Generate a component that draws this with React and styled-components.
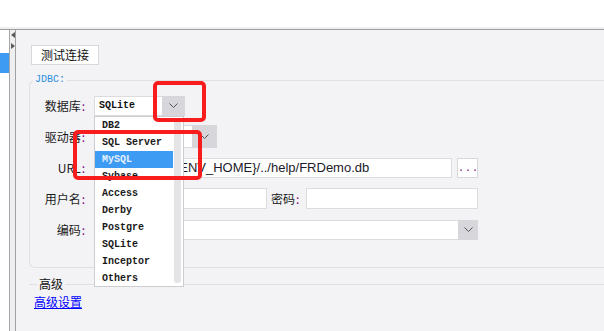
import styled, { createGlobalStyle } from 'styled-components';

const GlobalStyle = createGlobalStyle`
  html, body { margin: 0; padding: 0; background: #fff; }
  body {
    width: 604px;
    height: 331px;
    overflow: hidden;
    font-family: "Noto Sans CJK SC", "Liberation Sans", sans-serif;
  }
`;

const dbList = ['DB2', 'SQL Server', 'MySQL', 'Sybase', 'Access', 'Derby', 'Postgre', 'SQLite', 'Inceptor', 'Others'];

function Chevron() {
  return (
    <svg width="9" height="5" viewBox="0 0 9 5">
      <polyline points="0.5,0.5 4.5,4.5 8.5,0.5" fill="none" stroke="#555" strokeWidth="1" />
    </svg>
  );
}

function ComboBox({ width, height, btn, children, menu }) {
  return (
    <ComboWrap $width={width} $height={height}>
      <ComboText>{children}</ComboText>
      <ComboButton $width={btn}><Chevron /></ComboButton>
      {menu}
    </ComboWrap>
  );
}

export default function App() {
  return (
    <>
      <GlobalStyle />
      <Page>
        <TopBar />
        <Body>
          <SideList>
            <SideItem />
          </SideList>
          <Collapser>
            <svg width="4" height="6" viewBox="0 0 4 6"><polygon points="4,0 0,3 4,6" fill="#5a5a5a" /></svg>
            <svg width="4" height="6" viewBox="0 0 4 6"><polygon points="0,0 4,3 0,6" fill="#5a5a5a" /></svg>
          </Collapser>
          <Main>
            <TestButton>测试连接</TestButton>
            <Group>
              <Legend>JDBC:</Legend>
              <FormGrid>
                <Label>数据库<Colon>:</Colon></Label>
                <Field>
                  <ComboBox
                    width={91}
                    height={20}
                    btn={23}
                    menu={
                      <Dropdown>
                        <Items>
                          {dbList.map((name) => (
                            <Item key={name} $selected={name === 'MySQL'}>{name}</Item>
                          ))}
                        </Items>
                        <ScrollTrack><Thumb /></ScrollTrack>
                      </Dropdown>
                    }
                  >
                    SQLite
                  </ComboBox>
                </Field>

                <Label>驱动器<Colon>:</Colon></Label>
                <Field>
                  <ComboBox width={123} height={23} btn={25} />
                </Field>

                <Label>URL<Colon>:</Colon></Label>
                <Field>
                  <TextInput $width={358} $pad={4}>jdbc:sqlite://${'{'}ENV_HOME{'}'}/../help/FRDemo.db</TextInput>
                  <DotsButton>...</DotsButton>
                </Field>

                <Label>用户名<Colon>:</Colon></Label>
                <Field>
                  <TextInput $width={173} $height={21} />
                  <InlineLabel>密码<Colon>:</Colon></InlineLabel>
                  <TextInput $grow $height={21} />
                </Field>

                <Label>编码<Colon>:</Colon></Label>
                <Field>
                  <ComboBox width={384} height={20} btn={20} />
                </Field>
              </FormGrid>
            </Group>
            <AdvGroup>
              <AdvLegend>高级</AdvLegend>
              <AdvLink href="#">高级设置</AdvLink>
            </AdvGroup>
          </Main>
        </Body>
        <Mark $x={153} $y={81} $w={53} $h={41} />
        <Mark $x={73} $y={130} $w={129} $h={50} />
      </Page>
    </>
  );
}

const Page = styled.div`
  position: relative;
  width: 604px;
  height: 331px;
  display: flex;
  flex-direction: column;
  overflow: hidden;
`;

const TopBar = styled.div`
  height: 27px;
  background: #fff;
  border-bottom: 2px solid #efeff1;
  flex-shrink: 0;
`;

const Body = styled.div`
  flex: 1;
  display: flex;
  border-top: 1px solid #9d9d9d;
  min-height: 0;
`;

const SideList = styled.div`
  width: 9px;
  background: #fff;
  border-right: 1px solid #a6a6a6;
  padding-top: 23px;
`;

const SideItem = styled.div`
  height: 20px;
  background: #3d9bf3;
`;

const Collapser = styled.div`
  width: 6px;
  background: #efeff1;
  border-right: 1px solid #a0a0a0;
  display: flex;
  flex-direction: column;
  align-items: flex-end;
  gap: 5px;
  padding-top: 2px;
  box-sizing: border-box;
`;

const Main = styled.div`
  flex: 1;
  background: #f3f3f5;
  padding: 15px 0 0 13px;
  display: flex;
  flex-direction: column;
  align-items: stretch;
  min-width: 0;
`;

const TestButton = styled.button`
  align-self: flex-start;
  margin-left: 2px;
  width: 68px;
  height: 20px;
  box-sizing: border-box;
  padding: 0;
  background: #fff;
  border: 1px solid #d7d7d9;
  font-family: "Noto Sans CJK SC", sans-serif;
  font-size: 12px;
  line-height: 18px;
  color: #111;
`;

const Group = styled.fieldset`
  margin: 9px 0 0 0;
  padding: 4px 0 22px 0;
  border: 1px solid #e0e0e3;
  border-right: none;
  border-radius: 6px 0 0 6px;
  min-width: 0;
`;

const Legend = styled.legend`
  margin-left: 3px;
  padding: 0 2px;
  font-family: "Liberation Mono", monospace;
  font-size: 10px;
  line-height: 12px;
  color: #2a8ee0;
`;

const FormGrid = styled.div`
  display: grid;
  grid-template-columns: 55px 384px;
  column-gap: 9px;
  grid-auto-rows: 31px;
  align-items: center;
`;

const Label = styled.div`
  text-align: right;
  white-space: nowrap;
  font-size: 12px;
  color: #1a1a1a;
`;

const Colon = styled.span`
  color: #800080;
  margin-left: 1px;
`;

const Field = styled.div`
  display: flex;
  align-items: center;
  gap: 4px;
`;

const InlineLabel = styled.span`
  width: 31px;
  white-space: nowrap;
  font-size: 12px;
  color: #1a1a1a;
`;

const ComboWrap = styled.div`
  position: relative;
  display: flex;
  width: ${(p) => p.$width}px;
  height: ${(p) => p.$height}px;
`;

const ComboText = styled.div`
  flex: 1;
  background: #fff;
  border: 1px solid #dcdcde;
  border-right: none;
  padding-left: 4px;
  overflow: hidden;
  white-space: nowrap;
  font-family: "Liberation Mono", monospace;
  font-weight: bold;
  font-size: 10px;
  display: flex;
  align-items: center;
  color: #111;
`;

const ComboButton = styled.div`
  width: ${(p) => p.$width}px;
  background: #d7d7db;
  display: flex;
  align-items: center;
  justify-content: center;
`;

const Dropdown = styled.div`
  position: absolute;
  top: 100%;
  left: 0;
  width: 90px;
  height: 171px;
  box-sizing: border-box;
  background: #fff;
  border: 1px solid #cdcdcf;
  display: flex;
  z-index: 5;
`;

const Items = styled.div`
  width: 78px;
  display: flex;
  flex-direction: column;
`;

const Item = styled.div`
  height: 17px;
  line-height: 17px;
  padding-left: 7px;
  font-family: "Liberation Mono", monospace;
  font-weight: bold;
  font-size: 10px;
  white-space: nowrap;
  color: ${(p) => (p.$selected ? '#e4f0ff' : '#1a1a1a')};
  background: ${(p) => (p.$selected ? '#3d9bf3' : 'transparent')};
`;

const ScrollTrack = styled.div`
  flex: 1;
  padding: 1px 2px 3px 1px;
  display: flex;
`;

const Thumb = styled.div`
  flex: 1;
  background: #e4e4e6;
  border-radius: 0 0 3px 3px;
`;

const TextInput = styled.div`
  width: ${(p) => (p.$grow ? 'auto' : `${p.$width}px`)};
  flex: ${(p) => (p.$grow ? 1 : 'none')};
  height: ${(p) => p.$height || 20}px;
  box-sizing: border-box;
  background: #fff;
  border: 1px solid #dcdcde;
  padding-left: ${(p) => p.$pad || 2}px;
  font-family: "Liberation Sans", sans-serif;
  font-size: 13px;
  line-height: 18px;
  color: #1c1c2a;
  white-space: nowrap;
  overflow: hidden;
`;

const DotsButton = styled.div`
  margin-left: 1px;
  width: 21px;
  height: 20px;
  box-sizing: border-box;
  background: #fff;
  border: 1px solid #d7d7d9;
  font-family: "Liberation Mono", monospace;
  font-size: 10px;
  letter-spacing: 1px;
  color: #800080;
  text-align: center;
  line-height: 20px;
`;

const AdvGroup = styled.fieldset`
  margin: 9px 0 0 0;
  padding: 3px 0 0 5px;
  border: none;
  border-top: 1px solid #e0e0e3;
  min-width: 0;
  font-size: 12px;
  line-height: 16px;
`;

const AdvLegend = styled.legend`
  margin-left: 3px;
  padding: 0 2px;
  font-size: 12px;
  line-height: 14px;
  color: #111;
`;

const AdvLink = styled.a`
  display: inline-block;
  font-size: 12px;
  line-height: 16px;
  color: #0000ff;
  text-decoration: underline;
`;

const Mark = styled.div`
  position: absolute;
  left: ${(p) => p.$x}px;
  top: ${(p) => p.$y}px;
  width: ${(p) => p.$w}px;
  height: ${(p) => p.$h}px;
  box-sizing: border-box;
  border: 4px solid #f81c1c;
  border-radius: 5px;
  z-index: 10;
  pointer-events: none;
`;
